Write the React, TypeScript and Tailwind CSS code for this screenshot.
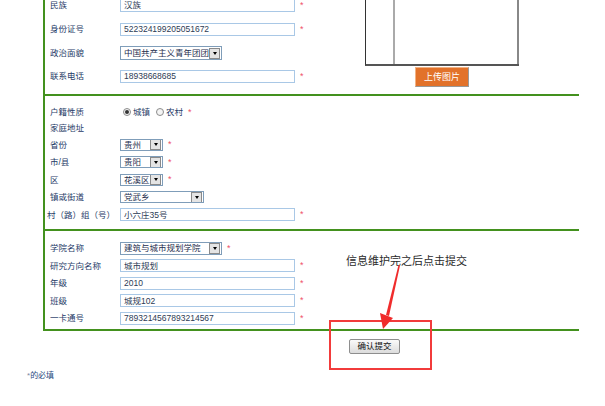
import type { ReactNode } from 'react';

const font = 'font-["Liberation_Sans","Noto_Sans_CJK_SC",sans-serif]';

function Star() {
  return <span className="ml-[5px] text-[9px] leading-none text-[#f0506a]">*</span>;
}

function Row({ label, className, children }: { label: string; className: string; children?: ReactNode }) {
  return (
    <div className={`flex items-center ${className}`}>
      <div className="w-[70px] shrink-0 text-[8.5px] leading-none text-[#1f3c68]">{label}</div>
      {children}
    </div>
  );
}

function TextInput({ value }: { value: string }) {
  return (
    <div className="flex h-[13px] w-[175px] items-center border border-[#a9c8e6] bg-white px-[3px] text-[8.5px] leading-none text-[#2d3b55]">
      {value}
    </div>
  );
}

function DropBtn() {
  return (
    <div className="flex h-[11px] w-[11px] shrink-0 items-center justify-center border border-[#8a8a8a] bg-[#e4e4e4]">
      <div className="h-0 w-0 border-x-[2.5px] border-t-[3px] border-x-transparent border-t-black" />
    </div>
  );
}

function Select({ value, className }: { value: string; className: string }) {
  return (
    <div className={`flex items-center overflow-hidden border border-[#7f9db9] bg-white pl-[3px] pr-px text-[8.5px] leading-none text-[#1f2f4f] ${className}`}>
      <span className="flex-1 overflow-hidden whitespace-nowrap">{value}</span>
      <DropBtn />
    </div>
  );
}

function Radio({ checked, label }: { checked?: boolean; label: string }) {
  return (
    <span className="flex items-center">
      <span className="flex h-[8px] w-[8px] items-center justify-center rounded-full border border-[#8c8c8c] bg-[#f4f4f4]">
        {checked && <span className="h-[4px] w-[4px] rounded-full bg-[#333]" />}
      </span>
      <span className="ml-[2px] text-[8.5px] leading-none text-[#1f3c68]">{label}</span>
    </span>
  );
}

export default function App() {
  return (
    <div className={`relative h-[406px] w-[605px] overflow-hidden bg-white ${font}`}>
      <div className="ml-[43px] w-[536px] border-l-2 border-[#43911e]">
        {/* basic info */}
        <div className="flex border-b-2 border-[#43911e] pb-[6px] pl-[5px]">
          <div className="-mt-[6px] flex w-[315px] flex-col">
            <Row label="民族" className="h-[23px]">
              <TextInput value="汉族" />
              <Star />
            </Row>
            <Row label="身份证号" className="h-[24px]">
              <TextInput value="522324199205051672" />
              <Star />
            </Row>
            <Row label="政治面貌" className="h-[24px]">
              <Select value="中国共产主义青年团团员" className="h-[14px] w-[102px]" />
            </Row>
            <Row label="联系电话" className="h-[23px]">
              <TextInput value="18938668685" />
              <Star />
            </Row>
          </div>
          <div className="flex w-[154px] flex-col items-center">
            <div className="flex h-[66px] w-[154px] border-b-2 border-l border-b-[#555] border-l-[#333]">
              <div className="ml-[27px] flex-1 border-l-2 border-r-2 border-l-[#aaa] border-r-[#888]" />
            </div>
            <div className="mt-px flex h-[20px] w-[54px] items-center justify-center border border-b-[#999] border-l-[#f3b283] border-r-[#999] border-t-[#f3b283] bg-[#e2722a] text-[9px] leading-none text-white">
              上传图片
            </div>
          </div>
        </div>

        {/* address */}
        <div className="flex flex-col border-b-2 border-[#43911e] pb-[5px] pl-[5px] pt-[8px]">
          <Row label="户籍性质" className="h-[16px]">
            <div className="ml-[3px] flex items-center gap-[6px]">
              <Radio checked label="城镇" />
              <Radio label="农村" />
            </div>
            <Star />
          </Row>
          <Row label="家庭地址" className="h-[16px]" />
          <Row label="省份" className="h-[17.5px]">
            <Select value="贵州" className="h-[12px] w-[43px]" />
            <Star />
          </Row>
          <Row label="市/县" className="h-[17.5px]">
            <Select value="贵阳" className="h-[12px] w-[43px]" />
            <Star />
          </Row>
          <Row label="区" className="h-[17.5px]">
            <Select value="花溪区" className="h-[12px] w-[43px]" />
            <Star />
          </Row>
          <Row label="镇或街道" className="h-[17.5px]">
            <Select value="党武乡" className="h-[12px] w-[84px]" />
          </Row>
          <div className="flex h-[17.5px] items-center">
            <div className="-ml-[3px] w-[73px] shrink-0 text-[8.5px] leading-none text-[#1f3c68]">村（路）组（号）</div>
            <TextInput value="小六庄35号" />
            <Star />
          </div>
        </div>

        {/* school */}
        <div className="flex flex-col border-b-2 border-[#43911e] pb-[2px] pl-[5px] pt-[9px]">
          <Row label="学院名称" className="h-[17.5px]">
            <Select value="建筑与城市规划学院" className="h-[13px] w-[102px]" />
            <Star />
          </Row>
          <Row label="研究方向名称" className="h-[17.5px]">
            <TextInput value="城市规划" />
            <Star />
          </Row>
          <Row label="年级" className="h-[17.5px]">
            <TextInput value="2010" />
            <Star />
          </Row>
          <Row label="班级" className="h-[17.5px]">
            <TextInput value="城规102" />
            <Star />
          </Row>
          <Row label="一卡通号" className="h-[17.5px]">
            <TextInput value="7893214567893214567" />
            <Star />
          </Row>
        </div>
      </div>

      <div className="pl-[349px] pt-[8px]">
        <button className="flex h-[15px] w-[51px] items-center justify-center rounded-[2px] border border-[#8e8e8e] bg-gradient-to-b from-[#fafafa] to-[#dcdcdc] text-[8.5px] leading-none text-[#111]">
          确认提交
        </button>
      </div>

      <div className="mt-[18px] pl-[27px] text-[8px] leading-none text-[#1f4a80]">
        <span className="text-[#7a8aa0]">*</span>的必填
      </div>

      {/* annotation overlay */}
      <div className="absolute left-[346px] top-[254px] text-[11px] leading-[14px] text-[#2a2a2a]">信息维护完之后点击提交</div>
      <div className="absolute left-[329px] top-[320px] h-[50px] w-[103px] border-2 border-[#f23b3b]" />
      <svg className="absolute left-0 top-0" width="605" height="406" viewBox="0 0 605 406">
        <polygon points="398.5,265 400,265.5 389,316 386,315" fill="#f02c2c" />
        <polygon points="380,313 393,318 383,329" fill="#f02c2c" />
      </svg>
    </div>
  );
}
